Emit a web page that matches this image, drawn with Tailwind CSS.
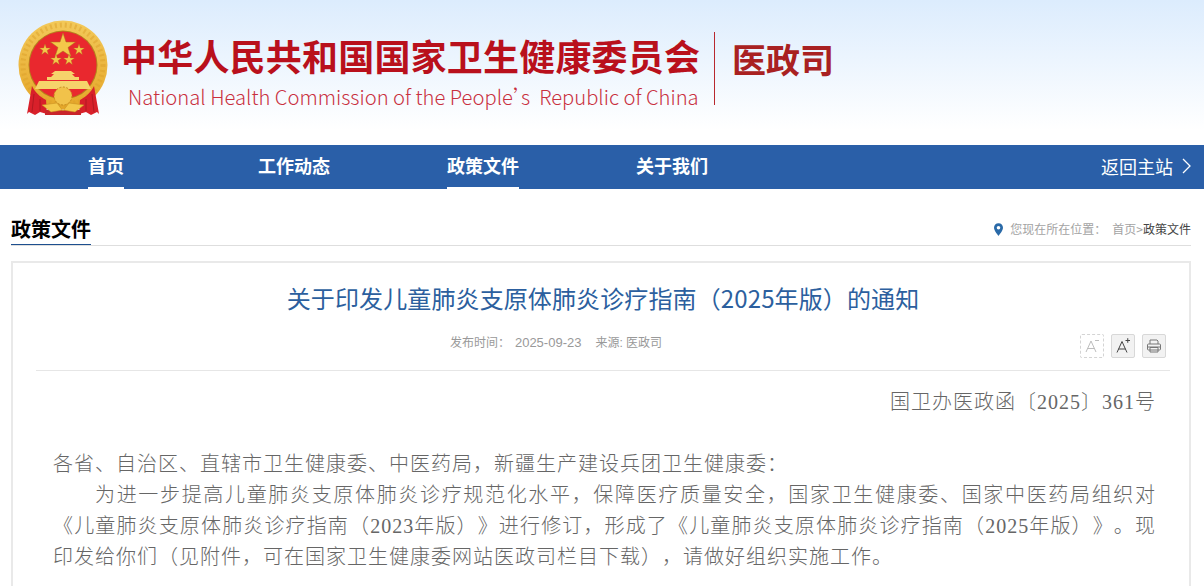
<!DOCTYPE html>
<html lang="zh-CN">
<head>
    <meta charset="UTF-8">
    <meta name="viewport" content="width=device-width, initial-scale=1.0">
    <title>关于印发儿童肺炎支原体肺炎诊疗指南（2025年版）的通知</title>
    <script src="https://cdn.jsdelivr.net/npm/@tailwindcss/browser@4"></script>
</head>
<body class="bg-white h-[586px] overflow-hidden font-['Noto_Sans_CJK_SC',sans-serif]">

    <!-- Header -->
    <header class="h-[145px] bg-gradient-to-b from-[#dcecfd] to-white to-[90%] flex items-start">
        <svg class="ml-[15px] mt-[20px] w-[93px] h-[98px] shrink-0" viewBox="0 0 93 98">
            <defs>
                <linearGradient id="gold" x1="0" y1="0" x2="0" y2="1">
                    <stop offset="0" stop-color="#f3c95a"/>
                    <stop offset="1" stop-color="#e5a628"/>
                </linearGradient>
            </defs>
            <!-- ring and disc -->
            <circle cx="48" cy="45" r="44.500" fill="url(#gold)"/>
            <circle cx="48" cy="45" r="40" fill="none" stroke="#dc9f2a" stroke-width="5" stroke-dasharray="2 3" opacity="0.500"/>
            <circle cx="48" cy="45" r="34.500" fill="#b5821c"/>
            <circle cx="48" cy="45" r="33.500" fill="#e9282e"/>
            <!-- stars -->
            <polygon points="48,13 51,22 60.500,22 53,27.500 56,36.500 48,31 40,36.500 43,27.500 35.500,22 45,22" fill="#f4c84a" stroke="#a8761a" stroke-width="0.500"/>
            <polygon points="30,24 31.300,28 35.500,28 32.100,30.500 33.400,34.500 30,32 26.600,34.500 27.900,30.500 24.500,28 28.700,28" fill="#f4c84a" stroke="#a8761a" stroke-width="0.300"/>
            <polygon points="64,24 65.300,28 69.500,28 66.100,30.500 67.400,34.500 64,32 60.600,34.500 61.900,30.500 58.500,28 62.700,28" fill="#f4c84a" stroke="#a8761a" stroke-width="0.300"/>
            <polygon points="41,34 42.300,38 46.500,38 43.100,40.500 44.400,44.500 41,42 37.600,44.500 38.900,40.500 35.500,38 39.700,38" fill="#f4c84a" stroke="#a8761a" stroke-width="0.300"/>
            <polygon points="54,34 55.300,38 59.500,38 56.100,40.500 57.400,44.500 54,42 50.600,44.500 51.900,40.500 48.500,38 52.700,38" fill="#f4c84a" stroke="#a8761a" stroke-width="0.300"/>
            <!-- gate -->
            <path d="M40 51 H56 L60 54 H57 L60 57 H64 V60 H32 V57 H36 L39 54 H36 Z" fill="#f6d36b"/>
            <path d="M24 61 H72 L76 69 H20 Z" fill="#f6d36b"/>
            <!-- ribbons -->
            <path d="M17 66 C20 72 24 76 31 80 L32 94 L25 92 L20 95 L14 92 L12 94 Z" fill="#d8202a"/>
            <path d="M79 66 C76 72 72 76 65 80 L64 94 L71 92 L76 95 L82 92 L84 94 Z" fill="#d8202a"/>
            <path d="M19 74 L17 92 M25 79 L25 91 M77 74 L79 92 M71 79 L71 91" stroke="#a81820" stroke-width="0.800" fill="none"/>
            <path d="M30 90 H66 V95 H30 Z" fill="#c9242b"/>
            <!-- gear and bow -->
            <circle cx="48" cy="76" r="9" fill="#f1c24a" stroke="#c48b1e" stroke-width="1" stroke-dasharray="2 1.500"/>
            <path d="M27 85 L42 83 L48 91 L54 83 L69 85 L60 92 L48 90 L36 92 Z" fill="#f4c84a" stroke="#c48b1e" stroke-width="0.500"/>
        </svg>

        <div class="ml-[14px] w-[593px] shrink-0">
            <h1 class="ml-[-1px] mt-[32px] text-[36px] leading-[46px] font-bold text-[#b9101c] whitespace-nowrap tracking-[0.2px]">中华人民共和国国家卫生健康委员会</h1>
            <p class="ml-[6px] mt-[5px] text-[20.200px] leading-[28px] text-[#c9303e] whitespace-nowrap font-light">National Health Commission of the People<span class="tracking-[-12px]">’</span>s&nbsp; Republic of China</p>
        </div>

        <div class="ml-[-1px] mt-[32px] w-px h-[73px] bg-[#b8282e]"></div>
        <div class="ml-[17px] mt-[36px] text-[34px] leading-[46px] font-bold text-[#a92121]">医政司</div>
    </header>

    <!-- Nav -->
    <nav class="h-[44px] bg-[#2a5fa8] flex text-white text-[18px] leading-[41px]">
        <a class="ml-[88px] h-full font-bold border-b-2 border-white">首页</a>
        <a class="ml-[134px] h-full font-bold">工作动态</a>
        <a class="ml-[117px] h-full font-bold border-b-2 border-white">政策文件</a>
        <a class="ml-[117px] h-full font-bold">关于我们</a>
        <a class="ml-auto h-full flex items-center gap-[9px] pr-[13px] pb-[2px]">
            返回主站
            <svg class="w-[9px] h-[16px]" viewBox="0 0 9 16" fill="none" stroke="white" stroke-width="1.300"><path d="M1 1 L8 8 L1 15"/></svg>
        </a>
    </nav>

    <!-- Section heading -->
    <div class="ml-[11px] mr-[13px] mt-[26px] h-[31px] border-b border-[#dedede] flex items-end justify-between">
        <h2 class="h-[31px] text-[20px] leading-[29px] font-bold text-black border-b border-[#1d4f8f] whitespace-nowrap">政策文件</h2>
        <div class="flex items-center text-[12px] leading-[28px] h-[29px] pb-[3px] text-[#a3a3a3] whitespace-nowrap">
            <svg class="w-[9px] h-[13px] mr-[7px]" viewBox="0 0 10 14"><path fill-rule="evenodd" d="M5 0 C2 0 0 2.200 0 5 C0 8.500 5 14 5 14 C5 14 10 8.500 10 5 C10 2.200 8 0 5 0 Z M5 3 A2 2 0 1 1 5 7 A2 2 0 1 1 5 3 Z" fill="#2a6aa8"/></svg>
            <span>您现在所在位置：</span>
            <span class="ml-[6px]">首页</span><span>&gt;</span><span class="text-[#444]">政策文件</span>
        </div>
    </div>

    <!-- Article card -->
    <main class="ml-[11px] mr-[13px] mt-[15px] border-2 border-[#e9e9e9] h-[400px] pl-[23px] pr-[19px]">
        <h3 class="pt-[17px] text-center text-[24px] leading-[36px] tracking-[0.12px] text-[#2c5f9e]">关于印发儿童肺炎支原体肺炎诊疗指南（2025年版）的通知</h3>

        <div class="relative h-[44px] mt-[11px] border-b border-[#e6e6e6] text-center text-[12px] leading-[18px] text-[#999] font-['Liberation_Sans','Noto_Sans_CJK_SC',sans-serif]">
            <div class="pt-[7px] pr-[94px]">
                <span>发布时间：</span><span class="ml-[5px] text-[13px]">2025-09-23</span><span class="ml-[14px]">来源: 医政司</span>
            </div>
            <div class="absolute right-[4px] top-[7px] flex gap-[7px]">
                <button class="w-[24px] h-[24px] rounded-[2px] border border-dashed border-[#d4d4d4] flex items-center justify-center">
                    <svg class="w-[18px] h-[18px]" viewBox="0 0 18 18" fill="none" stroke="#bdbdbd" stroke-width="1"><path d="M3 15 L8 4 L13 15 M4.500 11.500 H11.500"/><path d="M12 3.500 H16"/></svg>
                </button>
                <button class="w-[24px] h-[24px] rounded-[2px] border border-[#d8d8d8] bg-[#f2f2f2] flex items-center justify-center">
                    <svg class="w-[18px] h-[18px]" viewBox="0 0 18 18" fill="none" stroke="#444" stroke-width="1"><path d="M3 15.500 L8 4.500 L13 15.500 M4.500 12 H11.500"/><path d="M11.500 3.500 H16 M13.750 1.200 V5.800"/></svg>
                </button>
                <button class="w-[24px] h-[24px] rounded-[2px] border border-[#d8d8d8] bg-[#f2f2f2] flex items-center justify-center">
                    <svg class="w-[16px] h-[16px]" viewBox="0 0 16 16" fill="none" stroke="#777" stroke-width="1"><path d="M4 6 V2 H11 L12 3 V6"/><rect x="1.500" y="6" width="13" height="6" rx="1"/><path d="M4 9.500 H12 V14 H4 Z M1.500 9 H14.500"/></svg>
                </button>
            </div>
        </div>

        <div class="pl-[17px] pr-[14px] text-[20px] leading-[31px] tracking-[1px] text-[#666] font-light font-['Liberation_Serif','Noto_Sans_CJK_SC',serif] [text-spacing-trim:space-all]">
            <p class="mt-[16px] text-right">国卫办医政函〔2025〕361号</p>
            <p class="mt-[31px] whitespace-nowrap">各省、自治区、直辖市卫生健康委、中医药局，新疆生产建设兵团卫生健康委：</p>
            <p class="indent-[42px] text-justify">为进一步提高儿童肺炎支原体肺炎诊疗规范化水平，保障医疗质量安全，国家卫生健康委、国家中医药局组织对《儿童肺炎支原体肺炎诊疗指南（2023年版）》进行修订，形成了《儿童肺炎支原体肺炎诊疗指南（2025年版）》。现印发给你们（见附件，可在国家卫生健康委网站医政司栏目下载），请做好组织实施工作。</p>
        </div>
    </main>

</body>
</html>
